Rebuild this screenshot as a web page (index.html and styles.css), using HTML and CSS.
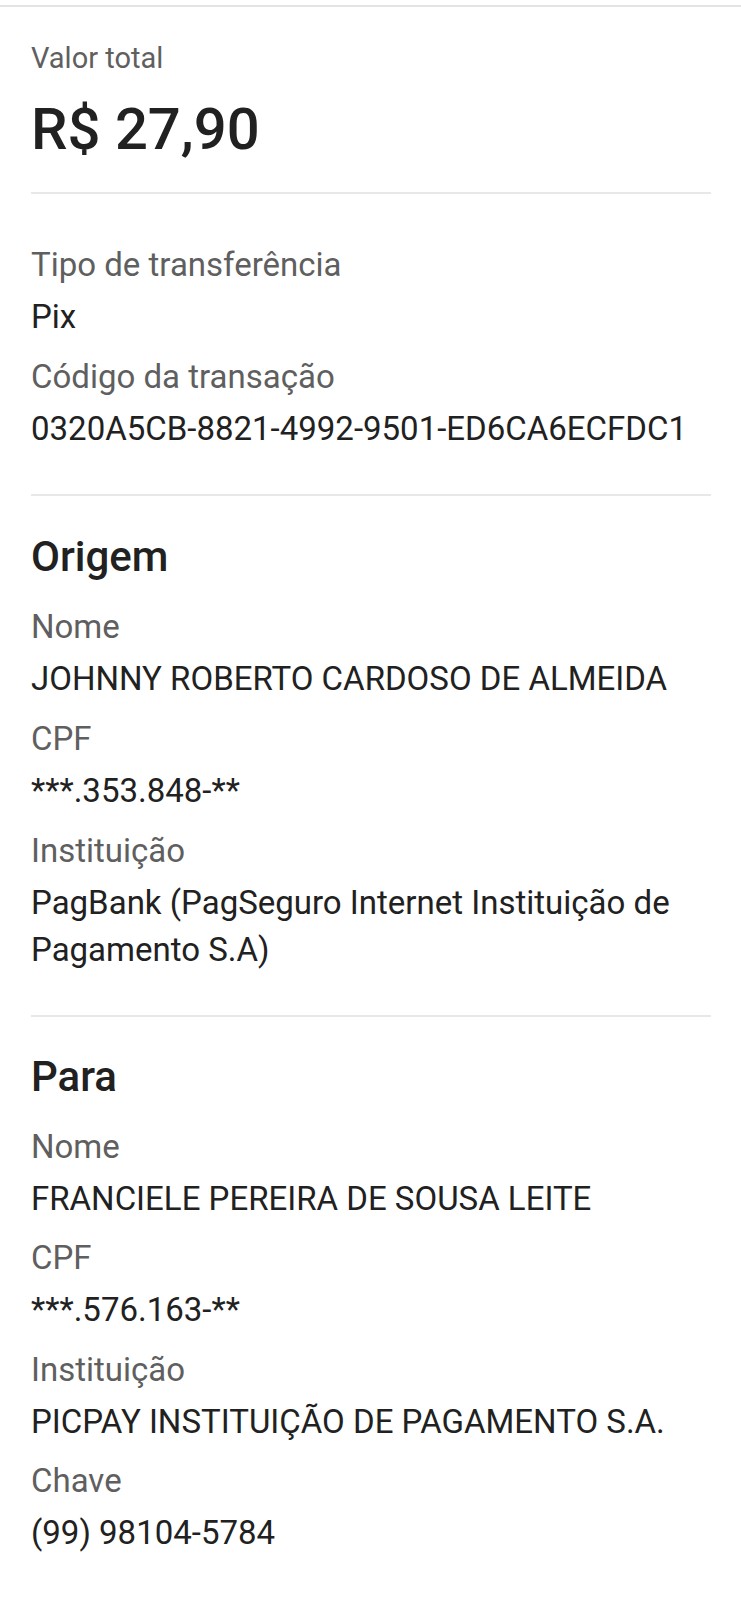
FILE: index.html
```html
<!DOCTYPE html>
<html lang="pt-BR">
<head>
<meta charset="utf-8">
<title>Comprovante Pix</title>
<link rel="stylesheet" href="styles.css">
</head>
<body>
<div class="top-rule"></div>
<main class="receipt">
  <section class="block block-total">
    <div class="label label-total">Valor total</div>
    <div class="amount">R$ 27,90</div>
  </section>
  <section class="block block-info">
    <div class="field">
      <div class="label">Tipo de transferência</div>
      <div class="value">Pix</div>
    </div>
    <div class="field">
      <div class="label">Código da transação</div>
      <div class="value">0320A5CB-8821-4992-9501-ED6CA6ECFDC1</div>
    </div>
  </section>
  <section class="block">
    <h2 class="heading">Origem</h2>
    <div class="field">
      <div class="label">Nome</div>
      <div class="value">JOHNNY ROBERTO CARDOSO DE ALMEIDA</div>
    </div>
    <div class="field">
      <div class="label">CPF</div>
      <div class="value">***.353.848-**</div>
    </div>
    <div class="field">
      <div class="label">Instituição</div>
      <div class="value">PagBank (PagSeguro Internet Instituição de Pagamento S.A)</div>
    </div>
  </section>
  <section class="block block-last">
    <h2 class="heading">Para</h2>
    <div class="field">
      <div class="label">Nome</div>
      <div class="value">FRANCIELE PEREIRA DE SOUSA LEITE</div>
    </div>
    <div class="field">
      <div class="label">CPF</div>
      <div class="value">***.576.163-**</div>
    </div>
    <div class="field">
      <div class="label">Instituição</div>
      <div class="value">PICPAY INSTITUIÇÃO DE PAGAMENTO S.A.</div>
    </div>
    <div class="field">
      <div class="label">Chave</div>
      <div class="value">(99) 98104-5784</div>
    </div>
  </section>
</main>
</body>
</html>
```
FILE: styles.css
```css
html, body {
  margin: 0;
  padding: 0;
  background: #ffffff;
}

body {
  font-family: Roboto, "Liberation Sans", sans-serif;
  color: #212121;
  padding-top: 5px;
}

.top-rule {
  height: 2px;
  background: #e4e4e4;
}

.receipt {
  padding: 0 30px 0 31px;
}

.block {
  display: flex;
  flex-direction: column;
  gap: 13px;
  padding: 37px 0 42px;
  border-bottom: 2px solid #e8e8e8;
}

.block-total {
  gap: 0;
  padding: 28px 0 28px;
}

.block-info {
  padding-top: 47px;
}

.block-last {
  gap: 12.5px;
  padding-top: 36px;
  border-bottom: none;
}

.field {
  display: flex;
  flex-direction: column;
  gap: 5px;
}

.label {
  font-size: 33px;
  line-height: 47px;
  color: #5f5f5f;
}

.label-total {
  font-size: 29px;
}

.value {
  font-size: 33px;
  line-height: 47px;
  color: #212121;
}

.amount {
  margin-top: 12px;
  font-size: 58px;
  line-height: 70px;
  font-weight: 500;
  color: #212121;
}

.heading {
  margin: 0 0 9px;
  font-size: 42px;
  line-height: 48px;
  font-weight: 500;
  color: #212121;
}
```
